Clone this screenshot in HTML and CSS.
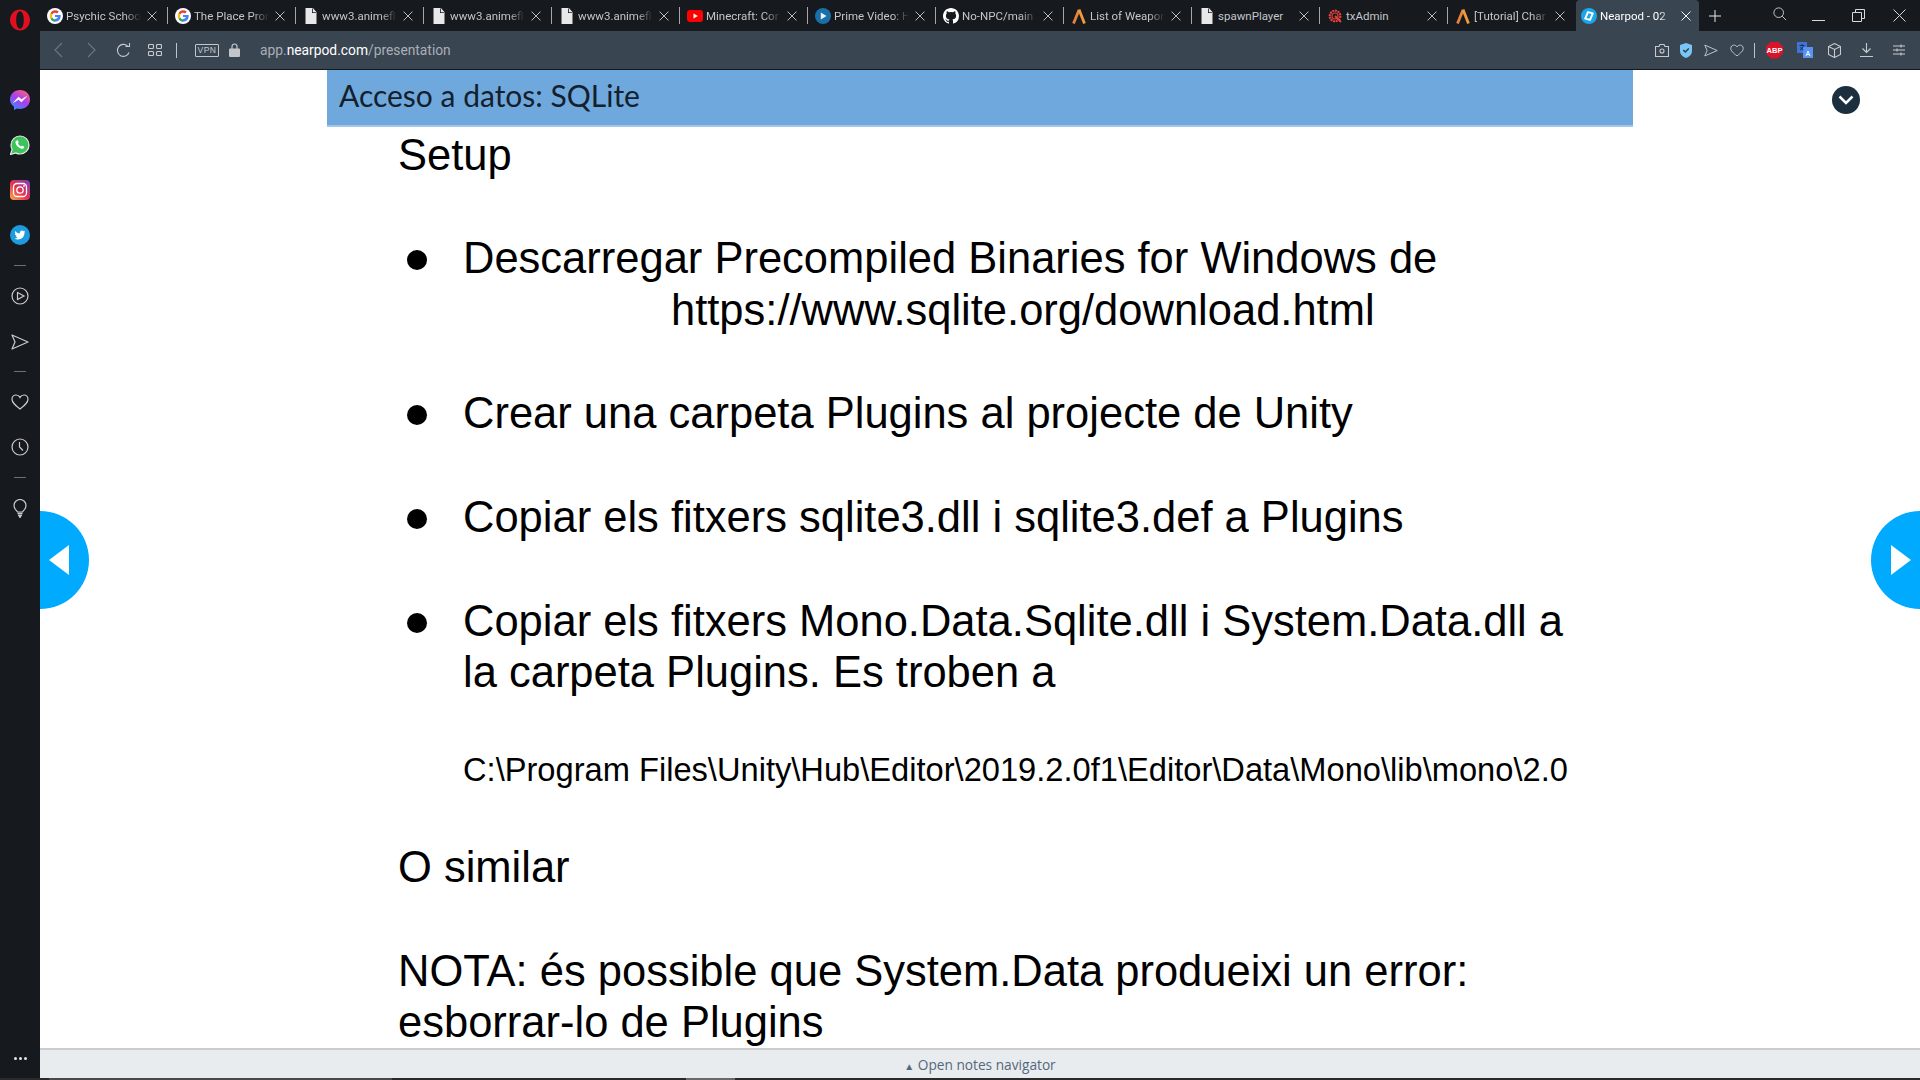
FILE: index.html
```html
<!DOCTYPE html>
<html lang="en">

<head>
  <meta charset="UTF-8">
  <meta name="viewport" content="width=device-width, initial-scale=1.0">
  <title>Nearpod - 02</title>
  <link rel="stylesheet" href="styles.css">
</head>

<body>
  <!-- Shared favicons and small icons -->
  <svg class="icon-defs" width="0" height="0">
    <symbol id="fav-google" viewBox="0 0 16 16">
      <circle cx="8" cy="8" r="8" fill="#fff" />
      <path d="M8 6.900h5.600c.1.400.1.800.1 1.200 0 3.300-2.200 5.600-5.700 5.600V10.900c1.400 0 2.500-.7 2.800-1.900H8z" fill="#4285f4" />
      <path d="M3.500 10.800 5.300 9.500c.5 1.200 1.500 1.800 2.700 1.800v2.400c-2 0-3.600-1.100-4.500-2.900z" fill="#34a853" />
      <path d="M3.500 5.200 5.300 6.500c-.3.900-.3 2.100 0 3L3.500 10.800c-.9-1.800-.9-3.800 0-5.600z" fill="#fbbc05" />
      <path d="M3.500 5.200C4.400 3.400 6 2.300 8 2.300c1.500 0 2.700.5 3.700 1.400l-1.700 1.700C9.500 4.900 8.800 4.700 8 4.700c-1.300 0-2.300.7-2.700 1.800z" fill="#ea4335" />
    </symbol>
    <symbol id="fav-doc" viewBox="0 0 16 16">
      <path d="M2.500 0h7l4 4.500V16h-11z" fill="#e8e8e8" />
      <path d="M9 0v5h4.500z" fill="#16191e" />
      <path d="M9.800 0v4.200h3.700z" fill="#e8e8e8" />
    </symbol>
    <symbol id="fav-youtube" viewBox="0 0 16 16">
      <rect y="2" width="16" height="12" rx="3" fill="#f00" />
      <path d="M6.500 5.400 10.800 8l-4.300 2.600z" fill="#fff" />
    </symbol>
    <symbol id="fav-prime" viewBox="0 0 16 16">
      <circle cx="8" cy="8" r="8" fill="#1a6fa8" />
      <path d="M5.800 4.500 11.500 8l-5.700 3.500z" fill="#e6f3fb" />
    </symbol>
    <symbol id="fav-github" viewBox="0 0 16 16">
      <path d="M8 0C3.580 0 0 3.580 0 8c0 3.540 2.290 6.530 5.470 7.590.4.070.55-.17.55-.38v-1.340c-2.230.48-2.690-1.070-2.690-1.070-.36-.92-.89-1.170-.89-1.170-.73-.5.050-.49.050-.49.800.060 1.230.82 1.230.82.710 1.220 1.870.87 2.330.66.070-.52.280-.87.510-1.070-1.780-.2-3.640-.89-3.640-3.950 0-.87.310-1.590.82-2.150-.080-.2-.36-1.020.080-2.120 0 0 .67-.21 2.200.82a7.600 7.600 0 0 1 4 0c1.530-1.040 2.200-.82 2.200-.82.44 1.100.16 1.920.080 2.120.51.560.82 1.270.82 2.150 0 3.070-1.870 3.750-3.650 3.950.29.250.54.730.54 1.480v2.190c0 .21.150.46.55.38A8 8 0 0 0 16 8c0-4.420-3.580-8-8-8z" fill="#fff" />
    </symbol>
    <symbol id="fav-fandom" viewBox="0 0 16 16">
      <path d="M2.500 15.500 8 2" fill="none" stroke="#e8833a" stroke-width="2.800" />
      <path d="M8 1.500 13.500 15.500" fill="none" stroke="#f29a38" stroke-width="2.800" />
    </symbol>
    <symbol id="fav-txadmin" viewBox="0 0 16 16">
      <circle cx="8" cy="8" r="5.300" fill="none" stroke="#e8403a" stroke-width="2.200" stroke-dasharray="2 .7" />
      <circle cx="8" cy="8" r="3" fill="none" stroke="#e8403a" stroke-width="1.100" />
      <path d="M8 8l6 6" stroke="#e8403a" stroke-width="2" />
    </symbol>
    <symbol id="fav-nearpod" viewBox="0 0 16 16">
      <circle cx="8" cy="8" r="8" fill="#1ba6ea" />
      <path d="M6 4.500h5l-1 7H5z" fill="none" stroke="#fff" stroke-width="2" stroke-linejoin="round" transform="rotate(15 8 8)" />
    </symbol>
    <symbol id="ic-close" viewBox="0 0 12 12">
      <path d="M1.500 1.500l9 9M10.500 1.500l-9 9" stroke="currentColor" stroke-width="1" fill="none" />
    </symbol>
    <symbol id="ic-send" viewBox="0 0 18 16">
      <path d="M1 1l16 7-16 7 3-7z" stroke="currentColor" stroke-width="1.200" fill="none" stroke-linejoin="round" />
    </symbol>
    <symbol id="ic-heart" viewBox="0 0 18 16">
      <path d="M9 15C4 11 1 8.500 1 5.200 1 2.800 2.800 1 5 1c1.700 0 3.200.9 4 2.400C9.800 1.900 11.300 1 13 1c2.200 0 4 1.800 4 4.200C17 8.500 14 11 9 15z" stroke="currentColor" stroke-width="1.200" fill="none" />
    </symbol>
  </svg>

  <div class="browser">
    <!-- Opera sidebar -->
    <aside class="rail">
      <svg class="opera-logo" width="20" height="24" viewBox="0 0 20 24">
        <path fill-rule="evenodd" fill="#e0101e" d="M10 1.500c5.500 0 10 4.700 10 10.500s-4.500 10.500-10 10.500S0 17.800 0 12 4.500 1.500 10 1.500zM10 3.300c-2.300 0-3.800 3.900-3.800 8.700s1.500 8.700 3.800 8.700 3.800-3.900 3.800-8.700S12.300 3.300 10 3.300z" />
      </svg>

      <div class="rail-icons">
        <svg class="rail-icon" width="20" height="20" viewBox="0 0 20 20">
          <defs>
            <linearGradient id="msgGrad" x1="0.200" y1="1" x2="0.800" y2="0">
              <stop offset="0" stop-color="#3a8cff" />
              <stop offset="0.500" stop-color="#a33ff0" />
              <stop offset="1" stop-color="#ff5f7e" />
            </linearGradient>
          </defs>
          <path d="M10 0c5.600 0 10 4.100 10 9.500S15.600 19 10 19c-1 0-2-.1-2.900-.4L4 20v-3.200C1.500 15 0 12.500 0 9.500 0 4.100 4.400 0 10 0z" fill="url(#msgGrad)" />
          <path d="M3.500 12.500 8.500 7l3 2.500L16.500 6.500l-5 5.500-3-2.500z" fill="#fff" stroke="#fff" stroke-width="0.500" />
        </svg>
        <svg class="rail-icon" width="20" height="20" viewBox="0 0 20 20">
          <path d="M10 1a9 9 0 0 1 0 18c-1.500 0-3-.4-4.300-1.100L.500 19.500l1.600-5C1.400 13.200 1 11.600 1 10a9 9 0 0 1 9-9z" fill="#3cc45a" stroke="#e8e8e8" stroke-width="1.200" />
          <path d="M6.800 5.500c.5-.3 1-.2 1.200.3l.6 1.400c.1.300 0 .6-.2.800l-.5.600c.7 1.300 1.700 2.300 3.100 3l.7-.7c.2-.2.500-.3.800-.2l1.400.7c.4.200.5.700.3 1.100-.5 1-1.600 1.500-2.700 1.200-3.100-.8-5.400-3.100-6-5.900-.2-1 .2-1.800 1.300-2.300z" fill="#fff" />
        </svg>
        <svg class="rail-icon" width="20" height="20" viewBox="0 0 20 20">
          <defs>
            <linearGradient id="igGrad" x1="0" y1="1" x2="1" y2="0">
              <stop offset="0" stop-color="#fdb44b" />
              <stop offset="0.450" stop-color="#e8334f" />
              <stop offset="1" stop-color="#7a3bbf" />
            </linearGradient>
          </defs>
          <rect width="20" height="20" rx="4" fill="url(#igGrad)" />
          <rect x="3.500" y="3.500" width="13" height="13" rx="3.500" fill="none" stroke="#fff" stroke-width="1.300" />
          <circle cx="10" cy="10" r="3.200" fill="none" stroke="#fff" stroke-width="1.300" />
          <circle cx="14" cy="6" r="0.900" fill="#fff" />
        </svg>
        <svg class="rail-icon" width="20" height="20" viewBox="0 0 20 20">
          <circle cx="10" cy="10" r="10" fill="#1d9bde" />
          <path d="M15.500 6.400c-.4.200-.8.300-1.300.4.500-.3.800-.7 1-1.200-.4.300-.9.500-1.400.6a2.300 2.300 0 0 0-3.900 2.100c-1.900-.1-3.600-1-4.700-2.400-.6 1-.3 2.300.7 3-.4 0-.7-.1-1-.3 0 1.100.8 2 1.800 2.300-.3.100-.7.100-1 0 .3.900 1.100 1.500 2.100 1.600-1 .8-2.200 1.100-3.400 1 3.500 2.200 10.200 1 10.200-6.400.4-.2.700-.5.900-.7z" fill="#fff" />
        </svg>
        <span class="rail-rule"></span>
        <svg class="rail-icon line-icon gap-28" width="18" height="18" viewBox="0 0 18 18">
          <circle cx="9" cy="9" r="8" />
          <path d="M6.500 5.500 13 9l-6.500 3.500z" />
        </svg>
        <svg class="rail-icon line-icon" width="18" height="18" viewBox="0 0 18 16"><use href="#ic-send" /></svg>
        <span class="rail-rule"></span>
        <svg class="rail-icon line-icon gap-27" width="18" height="18" viewBox="0 0 18 16"><use href="#ic-heart" /></svg>
        <svg class="rail-icon line-icon gap-26" width="18" height="18" viewBox="0 0 18 18">
          <circle cx="9" cy="9" r="8" />
          <path d="M8.500 4v5l3.500 3.500" />
        </svg>
        <span class="rail-rule"></span>
        <svg class="rail-icon line-icon" width="14" height="19" viewBox="0 0 14 19">
          <path d="M4.500 13C3 11 1 9.500 1 6.500a6 6 0 0 1 12 0c0 3-2 4.500-3.500 6.500z" />
          <path d="M4.500 14.500h5M5 16.500h4M6 18h2" stroke-width="1.500" />
        </svg>
      </div>

      <div class="rail-dots">
        <span></span><span></span><span></span>
      </div>
    </aside>

    <div class="window">
      <header class="tabbar">
        <div class="tab">
          <svg class="tab-icon" width="16" height="16"><use href="#fav-google" /></svg>
          <span class="tab-title">Psychic Schoo</span>
          <svg class="tab-close" width="12" height="12"><use href="#ic-close" /></svg>
        </div>
        <div class="tab">
          <svg class="tab-icon" width="16" height="16"><use href="#fav-google" /></svg>
          <span class="tab-title">The Place Pror</span>
          <svg class="tab-close" width="12" height="12"><use href="#ic-close" /></svg>
        </div>
        <div class="tab">
          <svg class="tab-icon" width="16" height="16"><use href="#fav-doc" /></svg>
          <span class="tab-title">www3.animefl</span>
          <svg class="tab-close" width="12" height="12"><use href="#ic-close" /></svg>
        </div>
        <div class="tab">
          <svg class="tab-icon" width="16" height="16"><use href="#fav-doc" /></svg>
          <span class="tab-title">www3.animefl</span>
          <svg class="tab-close" width="12" height="12"><use href="#ic-close" /></svg>
        </div>
        <div class="tab">
          <svg class="tab-icon" width="16" height="16"><use href="#fav-doc" /></svg>
          <span class="tab-title">www3.animefl</span>
          <svg class="tab-close" width="12" height="12"><use href="#ic-close" /></svg>
        </div>
        <div class="tab">
          <svg class="tab-icon" width="16" height="16"><use href="#fav-youtube" /></svg>
          <span class="tab-title">Minecraft: Cor</span>
          <svg class="tab-close" width="12" height="12"><use href="#ic-close" /></svg>
        </div>
        <div class="tab">
          <svg class="tab-icon" width="16" height="16"><use href="#fav-prime" /></svg>
          <span class="tab-title">Prime Video: H</span>
          <svg class="tab-close" width="12" height="12"><use href="#ic-close" /></svg>
        </div>
        <div class="tab">
          <svg class="tab-icon" width="16" height="16"><use href="#fav-github" /></svg>
          <span class="tab-title">No-NPC/main</span>
          <svg class="tab-close" width="12" height="12"><use href="#ic-close" /></svg>
        </div>
        <div class="tab">
          <svg class="tab-icon" width="16" height="16"><use href="#fav-fandom" /></svg>
          <span class="tab-title">List of Weapor</span>
          <svg class="tab-close" width="12" height="12"><use href="#ic-close" /></svg>
        </div>
        <div class="tab">
          <svg class="tab-icon" width="16" height="16"><use href="#fav-doc" /></svg>
          <span class="tab-title no-fade">spawnPlayer</span>
          <svg class="tab-close" width="12" height="12"><use href="#ic-close" /></svg>
        </div>
        <div class="tab">
          <svg class="tab-icon" width="16" height="16"><use href="#fav-txadmin" /></svg>
          <span class="tab-title no-fade">txAdmin</span>
          <svg class="tab-close" width="12" height="12"><use href="#ic-close" /></svg>
        </div>
        <div class="tab tab-last">
          <svg class="tab-icon" width="16" height="16"><use href="#fav-fandom" /></svg>
          <span class="tab-title">[Tutorial] Char</span>
          <svg class="tab-close" width="12" height="12"><use href="#ic-close" /></svg>
        </div>
        <div class="tab active">
          <svg class="tab-icon" width="16" height="16"><use href="#fav-nearpod" /></svg>
          <span class="tab-title">Nearpod - 02</span>
          <svg class="tab-close" width="12" height="12"><use href="#ic-close" /></svg>
        </div>

        <svg class="tab-add" width="12" height="12" viewBox="0 0 12 12">
          <path d="M6 0v12M0 6h12" />
        </svg>

        <div class="window-controls">
          <svg class="search-icon" width="14" height="14" viewBox="0 0 16 16">
            <circle cx="6.500" cy="6.500" r="5.500" />
            <path d="M10.500 10.500 15 15" />
          </svg>
          <svg width="13" height="13" viewBox="0 0 13 13"><path d="M0 11.500h13" /></svg>
          <svg width="13" height="13" viewBox="0 0 13 13">
            <path d="M.5 3.500h9v9h-9zM3.500 3.500v-3h9v9h-3" />
          </svg>
          <svg width="13" height="13" viewBox="0 0 13 13"><path d="M.5.500l12 12M12.500.500l-12 12" /></svg>
        </div>
      </header>

      <nav class="addressbar">
        <svg class="nav-icon dim" width="10" height="16" viewBox="0 0 10 16"><path d="M9 1 2 8l7 7" /></svg>
        <svg class="nav-icon dim" width="10" height="16" viewBox="0 0 10 16"><path d="M1 1l7 7-7 7" /></svg>
        <svg class="nav-icon reload" width="15" height="15" viewBox="0 0 15 15">
          <path d="M13 9.500A6 6 0 1 1 11.500 3" />
          <path d="M9.500 3.500h4V0" />
        </svg>
        <svg class="nav-icon" width="14" height="12" viewBox="0 0 14 12">
          <rect x="0.500" y="0.500" width="5" height="4" rx="1" />
          <rect x="8.500" y="0.500" width="5" height="4" rx="1" />
          <rect x="0.500" y="7.500" width="5" height="4" rx="1" />
          <rect x="8.500" y="7.500" width="5" height="4" rx="1" />
        </svg>
        <span class="nav-rule"></span>
        <span class="vpn-badge">VPN</span>
        <svg class="lock-icon" width="11" height="14" viewBox="0 0 11 14">
          <path d="M3 6V3.500a2.500 2.500 0 0 1 5 0V6" fill="none" stroke="#c3c7cb" stroke-width="1.200" />
          <rect y="5.500" width="11" height="8.500" rx="1" fill="#c3c7cb" />
        </svg>
        <span class="url">app.<b>nearpod.com</b>/presentation</span>

        <div class="nav-right">
          <svg class="nav-icon" width="14" height="13" viewBox="0 0 14 13">
            <path d="M.5 2.500h3.500l1-2h4l1 2h3.500v10H.5z" />
            <circle cx="7" cy="7" r="2" />
          </svg>
          <svg width="12" height="15" viewBox="0 0 12 15">
            <path d="M6 0l6 2v6c0 3.500-3 6-6 7-3-1-6-3.500-6-7V2z" fill="#79c6f5" />
            <path d="M3.300 7 5.300 9l3.500-3.500" fill="none" stroke="#2d3e50" stroke-width="1.500" />
          </svg>
          <svg class="nav-icon" width="14" height="13" viewBox="0 0 18 16"><use href="#ic-send" /></svg>
          <svg class="nav-icon" width="14" height="13" viewBox="0 0 18 16"><use href="#ic-heart" /></svg>
          <span class="nav-rule right-rule"></span>
          <span class="abp-badge">ABP</span>
          <svg class="translate-icon" width="16" height="16" viewBox="0 0 16 16">
            <rect width="10" height="11" fill="#3f73d8" />
            <rect x="6" y="5" width="10" height="11" fill="#5a92f2" />
            <path d="M2.500 3.500h5M5 2v1.500M3 8c2-1 3-2.500 3.500-4.500M3.500 5c.5 1.500 1.500 2.500 3 3" stroke="#16233c" stroke-width="0.800" fill="none" />
            <path d="M9 14l2-5 2 5M9.800 12.500h2.400" stroke="#fff" stroke-width="0.900" fill="none" />
          </svg>
          <svg class="nav-icon cube-icon" width="13" height="15" viewBox="0 0 13 15">
            <path d="M6.500.500l6 3v8l-6 3-6-3v-8z" />
            <path d="M.5 3.500l6 3 6-3M6.500 6.500v8" />
          </svg>
          <svg class="nav-icon download-icon" width="13" height="14" viewBox="0 0 13 14">
            <path d="M6.500 0v9M2.500 5.500l4 4 4-4M0 13.500h13" />
          </svg>
          <svg class="nav-icon sliders-icon" width="12" height="12" viewBox="0 0 12 12">
            <path d="M0 2h12M0 6h12M0 10h12M8 .5v3M4 4.500v3M8 8.500v3" />
          </svg>
        </div>
      </nav>

      <main class="viewer">
        <div class="lesson">
          <h1 class="lesson-title">Acceso a datos: SQLite</h1>

          <section class="slide">
            <p>Setup</p>

            <ul class="slide-list">
              <li>
                <div>Descarregar Precompiled Binaries for Windows de
                  <span class="slide-link">https://www.sqlite.org/download.html</span>
                </div>
              </li>
              <li>
                <div>Crear una carpeta Plugins al projecte de Unity</div>
              </li>
              <li>
                <div>Copiar els fitxers sqlite3.dll i sqlite3.def a Plugins</div>
              </li>
              <li>
                <div>Copiar els fitxers Mono.Data.Sqlite.dll i System.Data.dll a la carpeta Plugins. Es troben a
                  <span class="slide-path">C:\Program Files\Unity\Hub\Editor\2019.2.0f1\Editor\Data\Mono\lib\mono\2.0</span>
                </div>
              </li>
            </ul>

            <p class="after-list">O similar</p>
            <p class="after-list">NOTA: és possible que System.Data produeixi un error: esborrar-lo de Plugins</p>
          </section>
        </div>

        <!-- Overlay controls on the presentation -->
        <button class="slide-nav prev"><span></span></button>
        <button class="slide-nav next"><span></span></button>
        <span class="collapse-btn">
          <svg width="16" height="10" viewBox="0 0 16 10"><path d="M1.500 1.500 8 8l6.500-6.500" /></svg>
        </span>
      </main>

      <footer class="notes-bar"><span class="notes-caret">▲</span> Open notes navigator</footer>
    </div>
  </div>

  <div class="bottom-strip">
    <span class="seg-a"></span>
    <span class="seg-b"></span>
    <span class="seg-c"></span>
  </div>
</body>

</html>
```

FILE: styles.css
```css
* {
  box-sizing: border-box;
}

html,
body {
  margin: 0;
  padding: 0;
  height: 100%;
  overflow: hidden;
}

body {
  font-family: "Liberation Sans", Arial, sans-serif;
  background: #16191e;
  display: flex;
  flex-direction: column;
}

.icon-defs {
  position: absolute;
}

.browser {
  flex: 1;
  min-height: 0;
  display: flex;
}

/* Sidebar */
.rail {
  width: 40px;
  flex-shrink: 0;
  background: #16191e;
  display: flex;
  flex-direction: column;
  align-items: center;
}

.opera-logo {
  margin-top: 8px;
}

.rail-icons {
  flex: 1;
  margin-top: 58px;
  display: flex;
  flex-direction: column;
  align-items: center;
}

.rail-icon {
  display: block;
  margin-bottom: 25px;
}

.rail-icon.gap-26 {
  margin-bottom: 26px;
}

.rail-icon.gap-27 {
  margin-bottom: 27px;
}

.rail-icon.gap-28 {
  margin-bottom: 28px;
}

.line-icon {
  fill: none;
  stroke: #c9cbce;
  stroke-width: 1.200;
  color: #c9cbce;
}

.rail-rule {
  width: 12px;
  height: 1px;
  background: #6d7075;
  margin: -5px 0 21px;
}

.rail-dots {
  display: flex;
  gap: 2px;
  margin-bottom: 18px;
}

.rail-dots span {
  width: 3px;
  height: 3px;
  border-radius: 50%;
  background: #e4e5e6;
}

.window {
  flex: 1;
  min-width: 0;
  display: flex;
  flex-direction: column;
}

/* Tabs */
.tabbar {
  height: 31px;
  flex-shrink: 0;
  background: #16191e;
  display: flex;
  align-items: center;
}

.tab {
  width: 128px;
  height: 31px;
  flex-shrink: 0;
  display: flex;
  align-items: center;
  padding: 0 10px 0 7px;
  position: relative;
  color: #c4c6c9;
  font-family: Roboto, sans-serif;
  font-size: 11.500px;
}

.tab::after {
  content: "";
  position: absolute;
  right: 0;
  top: 7px;
  height: 17px;
  width: 1px;
  background: #a4a6a9;
}

.tab.tab-last::after,
.tab.active::after {
  display: none;
}

.tab.active {
  width: 123px;
  background: #3a4552;
  border-radius: 4px 4px 0 0;
  color: #fff;
  padding: 0 7px 0 5px;
}

.tab-icon {
  flex-shrink: 0;
  margin-right: 3px;
}

.tab-title {
  flex: 1;
  min-width: 0;
  overflow: hidden;
  white-space: nowrap;
  -webkit-mask-image: linear-gradient(to right, #000 78%, transparent 100%);
  mask-image: linear-gradient(to right, #000 78%, transparent 100%);
}

.tab-title.no-fade {
  -webkit-mask-image: none;
  mask-image: none;
}

.tab-close {
  flex-shrink: 0;
  margin-left: 5px;
  color: #b9bbbe;
}

.tab.active .tab-close {
  color: #fff;
}

.tab-add {
  margin-left: 10px;
  stroke: #e8e8e8;
  stroke-width: 1;
}

.window-controls {
  margin-left: auto;
  width: 136px;
  margin-right: 14px;
  display: flex;
  justify-content: space-between;
  align-items: center;
}

.window-controls svg {
  fill: none;
  stroke: #d8d9da;
  stroke-width: 1;
}

.window-controls .search-icon {
  margin-left: 3px;
  margin-right: -3px;
  margin-top: -3px;
}

/* Address bar */
.addressbar {
  height: 39px;
  flex-shrink: 0;
  background: #3a4552;
  border-bottom: 1px solid #14171b;
  display: flex;
  align-items: center;
  padding-left: 13px;
}

.nav-icon {
  flex-shrink: 0;
  fill: none;
  stroke: #c8cbce;
  stroke-width: 1.100;
  color: #c8cbce;
}

.nav-icon.dim {
  stroke: #6d7782;
  margin-right: 24px;
}

.nav-icon.reload {
  margin-right: 17px;
  margin-left: -5px;
}

.nav-rule {
  width: 1px;
  height: 15px;
  background: #bfc3c7;
  flex-shrink: 0;
}

.addressbar > .nav-rule {
  margin: 0 18px 0 14px;
}

.vpn-badge {
  width: 24px;
  height: 13px;
  border: 1px solid #c3c7cb;
  border-radius: 1px;
  color: #c3c7cb;
  font-size: 8.500px;
  line-height: 11px;
  letter-spacing: 0.5px;
  text-align: center;
  margin-right: 10px;
}

.lock-icon {
  margin-right: 20px;
}

.url {
  color: #a9afb6;
  font-family: Roboto, sans-serif;
  font-size: 13.800px;
}

.url b {
  color: #fff;
  font-weight: 400;
}

.nav-right {
  margin-left: auto;
  padding-right: 15px;
  display: flex;
  align-items: center;
  gap: 12px;
}

.nav-right > :first-child {
  margin-right: -1px;
}

.right-rule {
  margin-left: -2px;
  margin-right: -1px;
}

.translate-icon {
  margin-left: 2px;
}

.cube-icon {
  margin-left: 3px;
}

.download-icon {
  margin-left: 7px;
}

.sliders-icon {
  margin-left: 8px;
}

.abp-badge {
  width: 17px;
  height: 17px;
  clip-path: polygon(30% 0, 70% 0, 100% 30%, 100% 70%, 70% 100%, 30% 100%, 0 70%, 0 30%);
  background: #d9132a;
  color: #fff;
  font-size: 7.500px;
  font-weight: 700;
  line-height: 17px;
  text-align: center;
}

/* Presentation */
.viewer {
  flex: 1;
  min-height: 0;
  position: relative;
  overflow: hidden;
  background: #fff;
}

.lesson {
  width: 1306px;
  height: 100%;
  margin-left: 287px;
  overflow: hidden;
}

.lesson-title {
  margin: 0;
  height: 57px;
  padding-left: 12px;
  background: #6fa8dc;
  border-bottom: 2px solid #a3c6e6;
  color: #14202c;
  font-family: Lato, sans-serif;
  font-size: 30px;
  font-weight: 400;
  line-height: 51px;
}

.slide {
  padding: 2.500px 43px 0 71px;
  color: #000;
  font-size: 43.500px;
  line-height: 51.700px;
}

.slide p {
  margin: 0;
}

.slide-list {
  list-style: none;
  margin: 51.500px 0 0;
  padding: 0;
}

.slide-list li {
  display: grid;
  grid-template-columns: 65px 1fr;
  margin-bottom: 52px;
}

.slide-list li:first-child {
  margin-bottom: 51px;
}

.slide-list li::before {
  content: "";
  width: 20px;
  height: 20px;
  margin: 17px 0 0 9px;
  border-radius: 50%;
  background: #000;
}

.slide-link {
  display: block;
  padding-left: 208px;
  margin-top: 1px;
}

.slide-path {
  display: block;
  margin-top: 51px;
  font-size: 32.650px;
  line-height: 40px;
  white-space: nowrap;
}

.slide .after-list {
  margin-bottom: 52px;
}

.slide-nav {
  position: absolute;
  top: 441px;
  width: 98px;
  height: 98px;
  padding: 0;
  border: none;
  border-radius: 50%;
  background: #00aaff;
}

.slide-nav span {
  position: absolute;
  top: 34px;
  width: 0;
  height: 0;
  border-top: 15px solid transparent;
  border-bottom: 15px solid transparent;
}

.slide-nav.prev {
  left: -49px;
}

.slide-nav.prev span {
  left: 58px;
  border-right: 20px solid #fff;
}

.slide-nav.next {
  right: -49px;
}

.slide-nav.next span {
  left: 20px;
  border-left: 20px solid #fff;
}

.collapse-btn {
  position: absolute;
  left: 1792px;
  top: 16px;
  width: 28px;
  height: 28px;
  border-radius: 50%;
  background: #1b2f3e;
  display: flex;
  align-items: center;
  justify-content: center;
}

.collapse-btn svg {
  fill: none;
  stroke: #fff;
  stroke-width: 2.500;
}

/* Notes footer */
.notes-bar {
  height: 30px;
  flex-shrink: 0;
  background: #e8ecef;
  border-top: 2px solid #c9cdd0;
  color: #56677a;
  font-family: "Open Sans", sans-serif;
  font-size: 13.700px;
  line-height: 30px;
  text-align: center;
}

.notes-caret {
  font-size: 10px;
}

.bottom-strip {
  height: 2px;
  flex-shrink: 0;
  background: #2a2a2a;
  display: flex;
}

.seg-a {
  width: 49px;
}

.seg-b {
  width: 343px;
  background: #4a4a4a;
}

.seg-c {
  width: 49px;
  margin-left: 294px;
  background: #6a6a6a;
}
```
